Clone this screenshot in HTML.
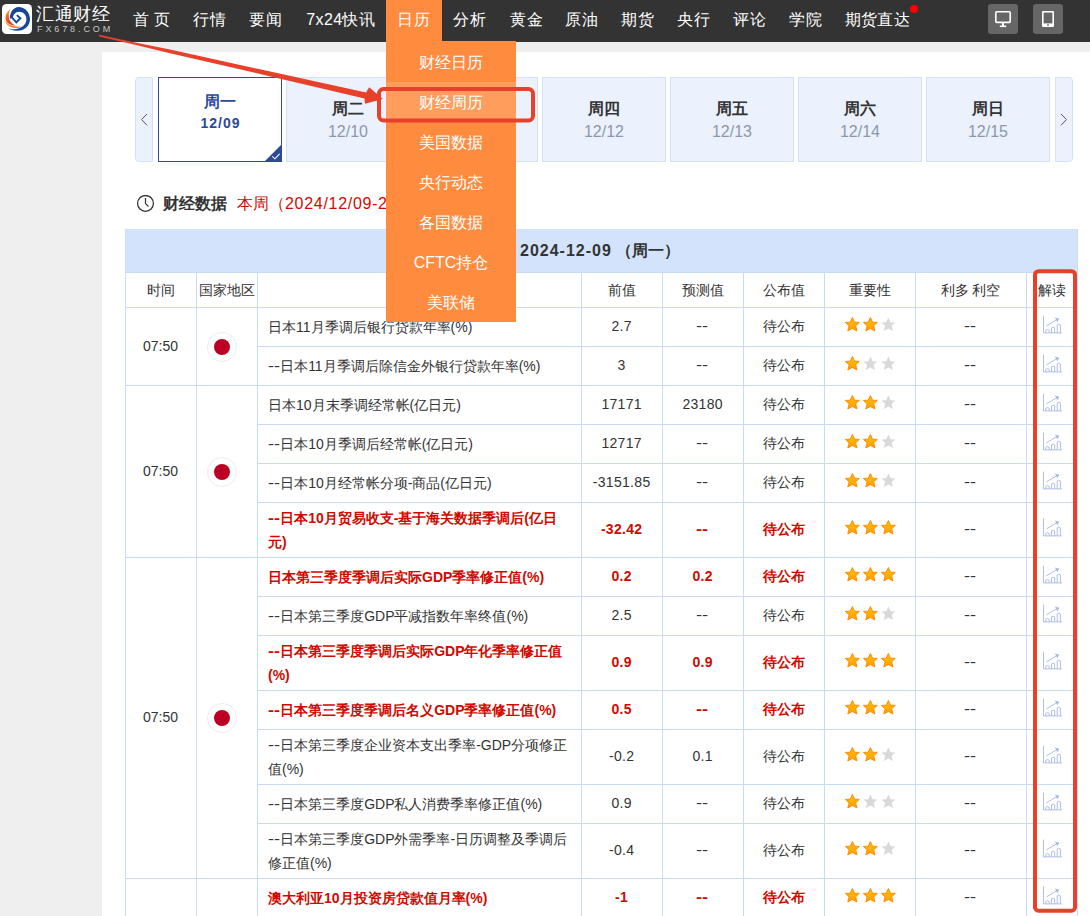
<!DOCTYPE html><html><head><meta charset="utf-8"><style>
*{box-sizing:border-box;margin:0;padding:0}
html,body{width:1090px;height:916px;overflow:hidden;background:#efefef;font-family:"Liberation Sans",sans-serif;color:#333}
.a{position:absolute;white-space:nowrap}
.nav{position:absolute;left:0;top:0;width:1090px;height:42px;background:#333333}
.ni{position:absolute;top:-1.5px;height:41px;line-height:41px;font-size:16px;color:#fff;letter-spacing:1px}
.tab{position:absolute;top:77px;height:85px;width:124px;background:#ebf2fd;border:1px solid #d3e2f8;text-align:center}
.tab .d{position:absolute;left:0;right:0;top:20.5px;font-size:16px;font-weight:bold;color:#333;line-height:20px}
.tab .t{position:absolute;left:0;right:0;top:45px;font-size:16px;color:#8e97a9;line-height:18px}
.hl{position:absolute;background:#c8daf4}
.c{position:absolute;text-align:center;font-size:14px;color:#333;white-space:nowrap}
.ev{position:absolute;font-size:14px;color:#333;line-height:24px}
.b{font-weight:bold;color:#d00a00}
.dd{position:absolute;left:386px;top:41px;width:130px;height:281px;background:#ff8b3f}
.ddi{position:absolute;left:386px;width:130px;height:40px;line-height:40px;text-align:center;color:#fff;font-size:16px}
</style></head><body>
<div class="a" style="left:102px;top:52px;width:1000px;height:900px;background:#fff"></div>
<div class="nav"></div>
<svg class="a" style="left:2px;top:4px" width="30" height="30" viewBox="0 0 30 30">
<defs><linearGradient id="og1" x1="0" y1="0" x2="0.3" y2="1"><stop offset="0" stop-color="#f7b52c"/><stop offset="0.55" stop-color="#ee5a22"/><stop offset="1" stop-color="#e8361a"/></linearGradient>
<linearGradient id="og2" x1="0" y1="0" x2="1" y2="0.3"><stop offset="0" stop-color="#f8c431"/><stop offset="0.5" stop-color="#f08a25"/><stop offset="1" stop-color="#e5381a"/></linearGradient></defs>
<rect x="0" y="0" width="30" height="30" rx="4.5" fill="#fff"/>
<path d="M7.8 14.5 C7.8 8 11.8 2.9 16.5 2.9 C22.8 2.9 28 8.3 28 15 C28 21.8 22.5 26.8 15.5 26.8 C12.3 26.8 9.2 25.9 7 24.6 C10 25.4 13 25.5 16.5 24.4 C21 23 24.4 19.8 24.4 15.2 C24.4 10.8 21.2 7.7 17.2 7.7 C13.5 7.7 10.8 10.8 10.8 14.5 Z" fill="#15469a"/>
<path d="M10.3 13.9 L14.3 18.3 L18.4 14.2 L14.8 11.1" fill="none" stroke="#15469a" stroke-width="1.9" stroke-linejoin="miter"/>
<path d="M8.6 4.8 C5 7.5 3.3 11 3.5 14.5 C3.8 18.5 7.5 21.5 14 21.6 C10 20 7.2 17 6.9 13.2 C6.6 10 7.2 7 8.6 4.8 Z" fill="url(#og1)"/>
<path d="M2 15.6 C3.5 20.5 7.5 23.5 12 23.8 C14.5 24 17.5 23.6 19.6 22.7 C17 22.8 14 22.7 11.5 22.2 C7.5 21.5 4 19 2 15.6 Z" fill="url(#og2)"/>
<path d="M6.5 24.3 C9 26 12 26.9 15.5 26.9 L15.5 26.1 C12.3 26 9 25.3 6.5 24.3 Z" fill="#4f8fd4"/>
</svg>
<div class="a" style="left:36px;top:3px;font-size:18px;line-height:22px;color:#fff;letter-spacing:0.5px">汇通财经</div>
<div class="a" style="left:37px;top:24px;font-size:9px;line-height:10px;color:#c8c8c8;letter-spacing:2.9px">FX678.COM</div>
<div class="a" style="left:386px;top:0;width:56px;height:42px;background:#ff8b3f"></div>
<div class="ni" style="left:132.7px;letter-spacing:0.4px">首 页</div>
<div class="ni" style="left:193.0px;letter-spacing:1px">行情</div>
<div class="ni" style="left:248.7px;letter-spacing:1px">要闻</div>
<div class="ni" style="left:306.2px;letter-spacing:0.4px">7x24快讯</div>
<div class="ni" style="left:396.7px;letter-spacing:1px">日历</div>
<div class="ni" style="left:452.5px;letter-spacing:1px">分析</div>
<div class="ni" style="left:509.5px;letter-spacing:1px">黄金</div>
<div class="ni" style="left:564.5px;letter-spacing:1px">原油</div>
<div class="ni" style="left:621.1px;letter-spacing:1px">期货</div>
<div class="ni" style="left:676.5px;letter-spacing:1px">央行</div>
<div class="ni" style="left:733.0px;letter-spacing:1px">评论</div>
<div class="ni" style="left:788.5px;letter-spacing:1px">学院</div>
<div class="ni" style="left:844.5px;letter-spacing:0.4px">期货直达</div>
<div class="a" style="left:910px;top:5px;width:8px;height:8px;border-radius:50%;background:#f00"></div>
<div class="a" style="left:988px;top:4px;width:30px;height:30px;border-radius:3px;background:#666"></div>
<svg class="a" style="left:988px;top:4px" width="30" height="30" viewBox="0 0 30 30">
<rect x="7.8" y="7.8" width="14.4" height="10.6" rx="1" fill="none" stroke="#fff" stroke-width="1.6"/>
<rect x="14" y="19" width="2" height="3" fill="#fff"/><rect x="11.8" y="21.5" width="6.4" height="1.6" fill="#fff"/>
</svg>
<div class="a" style="left:1033px;top:4px;width:30px;height:30px;border-radius:3px;background:#666"></div>
<svg class="a" style="left:1033px;top:4px" width="30" height="30" viewBox="0 0 30 30">
<rect x="9" y="7" width="12" height="16" rx="1" fill="#fff"/>
<rect x="10.6" y="8.6" width="8.8" height="10.8" fill="#666"/>
<rect x="14.2" y="20.2" width="1.6" height="1.6" fill="#666"/>
</svg>
<div class="a" style="left:135px;top:77px;width:18px;height:85px;background:#ebf2fd;border:1px solid #d3e2f8;border-radius:4px 0 0 4px"></div>
<svg class="a" style="left:135px;top:77px" width="18" height="85"><path d="M12 37 L6.5 42.6 L12 48.3" fill="none" stroke="#555" stroke-width="1"/></svg>
<div class="a" style="left:1055px;top:77px;width:18px;height:85px;background:#ebf2fd;border:1px solid #d3e2f8;border-radius:0 4px 4px 0"></div>
<svg class="a" style="left:1055px;top:77px" width="18" height="85"><path d="M6 37 L11.5 42.6 L6 48.3" fill="none" stroke="#555" stroke-width="1"/></svg>
<div class="tab" style="left:158px;background:#fff;border:1.5px solid #2c4a9a"><div class="d" style="top:13.5px;color:#2c4a9a">周一</div><div class="t" style="top:36px;font-size:14px;letter-spacing:1px;text-indent:1px;color:#2c4a9a;font-weight:bold">12/09</div><svg style="position:absolute;right:0;bottom:0" width="16" height="16"><path d="M16 0 L16 16 L0 16 Z" fill="#2c4a9a"/><path d="M7.3 11.4 L9.9 13.8 L14.6 8.8" fill="none" stroke="#fff" stroke-width="1.1"/></svg></div>
<div class="tab" style="left:286px"><div class="d">周二</div><div class="t">12/10</div></div>
<div class="tab" style="left:414px"><div class="d">周三</div><div class="t">12/11</div></div>
<div class="tab" style="left:542px"><div class="d">周四</div><div class="t">12/12</div></div>
<div class="tab" style="left:670px"><div class="d">周五</div><div class="t">12/13</div></div>
<div class="tab" style="left:798px"><div class="d">周六</div><div class="t">12/14</div></div>
<div class="tab" style="left:926px"><div class="d">周日</div><div class="t">12/15</div></div>
<svg class="a" style="left:136px;top:195px" width="19" height="18" viewBox="0 0 19 18">
<circle cx="9.5" cy="8.4" r="7.9" fill="none" stroke="#333" stroke-width="1.25"/>
<path d="M9.5 2.9 V8.6 L12.5 11.5" fill="none" stroke="#333" stroke-width="1.25"/></svg>
<div class="a" style="left:163px;top:194px;font-size:16px;line-height:20px;font-weight:bold;color:#333">财经数据</div>
<div class="a" style="left:237px;top:194px;font-size:16px;line-height:20px;color:#d00a00">本周（<span style="letter-spacing:0.7px">2024/12/09-2024/12/15</span>）</div>
<div class="a" style="left:125px;top:229px;width:953px;height:43px;background:#d2e3fb"></div>
<div class="a" style="left:520px;top:229px;height:43px;line-height:43px;font-size:16px;font-weight:bold;color:#333"><span style="letter-spacing:1px">2024-12-09</span> （周一）</div>
<div class="hl" style="left:125px;top:272px;width:953px;height:1px"></div>
<div class="hl" style="left:125px;top:307px;width:953px;height:1px"></div>
<div class="c" style="left:125px;width:71px;top:273px;height:35px;line-height:35px">时间</div>
<div class="c" style="left:196px;width:61px;top:273px;height:35px;line-height:35px">国家地区</div>
<div class="c" style="left:257px;width:324px;top:273px;height:35px;line-height:35px"></div>
<div class="c" style="left:581px;width:81px;top:273px;height:35px;line-height:35px">前值</div>
<div class="c" style="left:662px;width:81px;top:273px;height:35px;line-height:35px">预测值</div>
<div class="c" style="left:743px;width:81px;top:273px;height:35px;line-height:35px">公布值</div>
<div class="c" style="left:824px;width:91px;top:273px;height:35px;line-height:35px">重要性</div>
<div class="c" style="left:915px;width:111px;top:273px;height:35px;line-height:35px">利多 利空</div>
<div class="c" style="left:1026px;width:51px;top:273px;height:35px;line-height:35px">解读</div>
<div class="hl" style="left:125px;top:307px;width:953px;height:1px"></div>
<div class="c" style="left:125px;width:71px;top:307px;height:78px;line-height:78px">07:50</div>
<div class="a" style="left:207px;top:331.7px;width:30px;height:30px;border-radius:50%;border:1px solid #ececec;background:#fff"></div>
<div class="a" style="left:214px;top:338.7px;width:16px;height:16px;border-radius:50%;background:#bc0023"></div>
<div class="hl" style="left:125px;top:385px;width:953px;height:1px"></div>
<div class="c" style="left:125px;width:71px;top:385px;height:172px;line-height:172px">07:50</div>
<div class="a" style="left:207px;top:456.7px;width:30px;height:30px;border-radius:50%;border:1px solid #ececec;background:#fff"></div>
<div class="a" style="left:214px;top:463.7px;width:16px;height:16px;border-radius:50%;background:#bc0023"></div>
<div class="hl" style="left:125px;top:557px;width:953px;height:1px"></div>
<div class="c" style="left:125px;width:71px;top:557px;height:321px;line-height:321px">07:50</div>
<div class="a" style="left:207px;top:703.2px;width:30px;height:30px;border-radius:50%;border:1px solid #ececec;background:#fff"></div>
<div class="a" style="left:214px;top:710.2px;width:16px;height:16px;border-radius:50%;background:#bc0023"></div>
<div class="hl" style="left:125px;top:878px;width:953px;height:1px"></div>
<div class="c" style="left:125px;width:71px;top:878px;height:222px;line-height:222px">07:50</div>
<div class="hl" style="left:257px;top:307px;width:821px;height:1px"></div>
<div class="hl" style="left:257px;top:346px;width:821px;height:1px"></div>
<div class="hl" style="left:257px;top:385px;width:821px;height:1px"></div>
<div class="hl" style="left:257px;top:424px;width:821px;height:1px"></div>
<div class="hl" style="left:257px;top:463px;width:821px;height:1px"></div>
<div class="hl" style="left:257px;top:502px;width:821px;height:1px"></div>
<div class="hl" style="left:257px;top:557px;width:821px;height:1px"></div>
<div class="hl" style="left:257px;top:596px;width:821px;height:1px"></div>
<div class="hl" style="left:257px;top:635px;width:821px;height:1px"></div>
<div class="hl" style="left:257px;top:690px;width:821px;height:1px"></div>
<div class="hl" style="left:257px;top:729px;width:821px;height:1px"></div>
<div class="hl" style="left:257px;top:784px;width:821px;height:1px"></div>
<div class="hl" style="left:257px;top:823px;width:821px;height:1px"></div>
<div class="hl" style="left:257px;top:878px;width:821px;height:1px"></div>
<div class="hl" style="left:257px;top:917px;width:821px;height:1px"></div>
<div class="hl" style="left:125px;top:272px;width:1px;height:644px"></div>
<div class="hl" style="left:196px;top:272px;width:1px;height:644px"></div>
<div class="hl" style="left:257px;top:272px;width:1px;height:644px"></div>
<div class="hl" style="left:581px;top:272px;width:1px;height:644px"></div>
<div class="hl" style="left:662px;top:272px;width:1px;height:644px"></div>
<div class="hl" style="left:743px;top:272px;width:1px;height:644px"></div>
<div class="hl" style="left:824px;top:272px;width:1px;height:644px"></div>
<div class="hl" style="left:915px;top:272px;width:1px;height:644px"></div>
<div class="hl" style="left:1026px;top:272px;width:1px;height:644px"></div>
<div class="hl" style="left:1077px;top:272px;width:1px;height:644px"></div>
<div class="hl" style="left:125px;top:229px;width:1px;height:687px"></div>
<div class="hl" style="left:1077px;top:229px;width:1px;height:687px"></div>
<svg width="0" height="0" style="position:absolute"><defs><linearGradient id="sg" x1="0" y1="0" x2="0" y2="1"><stop offset="0" stop-color="#ffc000"/><stop offset="1" stop-color="#ffa000"/></linearGradient></defs></svg>
<div class="ev" style="left:268px;top:307px;width:305px;height:39px;display:flex;align-items:center"><div>日本11月季调后银行贷款年率(%)</div></div>
<div class="c" style="letter-spacing:0.3px;text-indent:0.3px;left:581px;width:81px;top:307px;height:39px;line-height:39px">2.7</div>
<div class="c" style="left:662px;width:81px;top:307px;height:39px;line-height:39px"><span style="display:inline-block;transform:scaleX(1.3);transform-origin:0 50%;margin-right:2.8px">--</span></div>
<div class="c" style="left:743px;width:81px;top:307px;height:39px;line-height:39px">待公布</div>
<div class="c" style="left:915px;width:111px;top:307px;height:39px;line-height:39px"><span style="display:inline-block;transform:scaleX(1.3);transform-origin:0 50%;margin-right:2.8px">--</span></div>
<svg class="a" style="left:844.8px;top:316.8px" width="15" height="15" viewBox="0 0 15 15"><path d="M7.4 0.5 L9.6 5.2 L14.3 5.4 L10.7 8.8 L11.9 13.9 L7.4 11.5 L2.8 13.9 L4.1 8.8 L0.4 5.4 L5.2 5.2 Z" fill="url(#sg)" stroke="#ff8400" stroke-width="0.9" stroke-linejoin="round"/></svg>
<svg class="a" style="left:862.8px;top:316.8px" width="15" height="15" viewBox="0 0 15 15"><path d="M7.4 0.5 L9.6 5.2 L14.3 5.4 L10.7 8.8 L11.9 13.9 L7.4 11.5 L2.8 13.9 L4.1 8.8 L0.4 5.4 L5.2 5.2 Z" fill="url(#sg)" stroke="#ff8400" stroke-width="0.9" stroke-linejoin="round"/></svg>
<svg class="a" style="left:880.8px;top:316.8px" width="15" height="15" viewBox="0 0 15 15"><path d="M7.4 0.5 L9.6 5.2 L14.3 5.4 L10.7 8.8 L11.9 13.9 L7.4 11.5 L2.8 13.9 L4.1 8.8 L0.4 5.4 L5.2 5.2 Z" fill="#d9d9d9" stroke="none" stroke-width="0.9" stroke-linejoin="round"/></svg>
<svg class="a" style="left:1042px;top:314.5px" width="21" height="20" viewBox="0 0 21 20"><g fill="none" stroke="#a6b8e2" stroke-width="0.9"><path d="M1.5 0.6 V17.9 H20"/><path d="M3.8 17.9 V15.3 Q5.5 13.8 7.2 15.3 V17.9"/><path d="M9.5 17.9 V12.9 Q11 11.4 12.7 12.9 V17.9"/><path d="M15.2 17.9 V9.9 Q16.8 8.4 18.4 9.9 V17.9"/><path d="M4.3 10.9 L15 4.6"/></g><path d="M12.9 2.6 L17.3 3.7 L15.3 7.2 Z" fill="#a6b8e2"/></svg>
<div class="ev" style="left:268px;top:346px;width:305px;height:39px;display:flex;align-items:center"><div><span style="display:inline-block;transform:scaleX(1.3);transform-origin:0 50%;margin-right:2.8px">--</span>日本11月季调后除信金外银行贷款年率(%)</div></div>
<div class="c" style="letter-spacing:0.3px;text-indent:0.3px;left:581px;width:81px;top:346px;height:39px;line-height:39px">3</div>
<div class="c" style="left:662px;width:81px;top:346px;height:39px;line-height:39px"><span style="display:inline-block;transform:scaleX(1.3);transform-origin:0 50%;margin-right:2.8px">--</span></div>
<div class="c" style="left:743px;width:81px;top:346px;height:39px;line-height:39px">待公布</div>
<div class="c" style="left:915px;width:111px;top:346px;height:39px;line-height:39px"><span style="display:inline-block;transform:scaleX(1.3);transform-origin:0 50%;margin-right:2.8px">--</span></div>
<svg class="a" style="left:844.8px;top:355.8px" width="15" height="15" viewBox="0 0 15 15"><path d="M7.4 0.5 L9.6 5.2 L14.3 5.4 L10.7 8.8 L11.9 13.9 L7.4 11.5 L2.8 13.9 L4.1 8.8 L0.4 5.4 L5.2 5.2 Z" fill="url(#sg)" stroke="#ff8400" stroke-width="0.9" stroke-linejoin="round"/></svg>
<svg class="a" style="left:862.8px;top:355.8px" width="15" height="15" viewBox="0 0 15 15"><path d="M7.4 0.5 L9.6 5.2 L14.3 5.4 L10.7 8.8 L11.9 13.9 L7.4 11.5 L2.8 13.9 L4.1 8.8 L0.4 5.4 L5.2 5.2 Z" fill="#d9d9d9" stroke="none" stroke-width="0.9" stroke-linejoin="round"/></svg>
<svg class="a" style="left:880.8px;top:355.8px" width="15" height="15" viewBox="0 0 15 15"><path d="M7.4 0.5 L9.6 5.2 L14.3 5.4 L10.7 8.8 L11.9 13.9 L7.4 11.5 L2.8 13.9 L4.1 8.8 L0.4 5.4 L5.2 5.2 Z" fill="#d9d9d9" stroke="none" stroke-width="0.9" stroke-linejoin="round"/></svg>
<svg class="a" style="left:1042px;top:353.5px" width="21" height="20" viewBox="0 0 21 20"><g fill="none" stroke="#a6b8e2" stroke-width="0.9"><path d="M1.5 0.6 V17.9 H20"/><path d="M3.8 17.9 V15.3 Q5.5 13.8 7.2 15.3 V17.9"/><path d="M9.5 17.9 V12.9 Q11 11.4 12.7 12.9 V17.9"/><path d="M15.2 17.9 V9.9 Q16.8 8.4 18.4 9.9 V17.9"/><path d="M4.3 10.9 L15 4.6"/></g><path d="M12.9 2.6 L17.3 3.7 L15.3 7.2 Z" fill="#a6b8e2"/></svg>
<div class="ev" style="left:268px;top:385px;width:305px;height:39px;display:flex;align-items:center"><div>日本10月末季调经常帐(亿日元)</div></div>
<div class="c" style="letter-spacing:0.3px;text-indent:0.3px;left:581px;width:81px;top:385px;height:39px;line-height:39px">17171</div>
<div class="c" style="letter-spacing:0.3px;text-indent:0.3px;left:662px;width:81px;top:385px;height:39px;line-height:39px">23180</div>
<div class="c" style="left:743px;width:81px;top:385px;height:39px;line-height:39px">待公布</div>
<div class="c" style="left:915px;width:111px;top:385px;height:39px;line-height:39px"><span style="display:inline-block;transform:scaleX(1.3);transform-origin:0 50%;margin-right:2.8px">--</span></div>
<svg class="a" style="left:844.8px;top:394.8px" width="15" height="15" viewBox="0 0 15 15"><path d="M7.4 0.5 L9.6 5.2 L14.3 5.4 L10.7 8.8 L11.9 13.9 L7.4 11.5 L2.8 13.9 L4.1 8.8 L0.4 5.4 L5.2 5.2 Z" fill="url(#sg)" stroke="#ff8400" stroke-width="0.9" stroke-linejoin="round"/></svg>
<svg class="a" style="left:862.8px;top:394.8px" width="15" height="15" viewBox="0 0 15 15"><path d="M7.4 0.5 L9.6 5.2 L14.3 5.4 L10.7 8.8 L11.9 13.9 L7.4 11.5 L2.8 13.9 L4.1 8.8 L0.4 5.4 L5.2 5.2 Z" fill="url(#sg)" stroke="#ff8400" stroke-width="0.9" stroke-linejoin="round"/></svg>
<svg class="a" style="left:880.8px;top:394.8px" width="15" height="15" viewBox="0 0 15 15"><path d="M7.4 0.5 L9.6 5.2 L14.3 5.4 L10.7 8.8 L11.9 13.9 L7.4 11.5 L2.8 13.9 L4.1 8.8 L0.4 5.4 L5.2 5.2 Z" fill="#d9d9d9" stroke="none" stroke-width="0.9" stroke-linejoin="round"/></svg>
<svg class="a" style="left:1042px;top:392.5px" width="21" height="20" viewBox="0 0 21 20"><g fill="none" stroke="#a6b8e2" stroke-width="0.9"><path d="M1.5 0.6 V17.9 H20"/><path d="M3.8 17.9 V15.3 Q5.5 13.8 7.2 15.3 V17.9"/><path d="M9.5 17.9 V12.9 Q11 11.4 12.7 12.9 V17.9"/><path d="M15.2 17.9 V9.9 Q16.8 8.4 18.4 9.9 V17.9"/><path d="M4.3 10.9 L15 4.6"/></g><path d="M12.9 2.6 L17.3 3.7 L15.3 7.2 Z" fill="#a6b8e2"/></svg>
<div class="ev" style="left:268px;top:424px;width:305px;height:39px;display:flex;align-items:center"><div><span style="display:inline-block;transform:scaleX(1.3);transform-origin:0 50%;margin-right:2.8px">--</span>日本10月季调后经常帐(亿日元)</div></div>
<div class="c" style="letter-spacing:0.3px;text-indent:0.3px;left:581px;width:81px;top:424px;height:39px;line-height:39px">12717</div>
<div class="c" style="left:662px;width:81px;top:424px;height:39px;line-height:39px"><span style="display:inline-block;transform:scaleX(1.3);transform-origin:0 50%;margin-right:2.8px">--</span></div>
<div class="c" style="left:743px;width:81px;top:424px;height:39px;line-height:39px">待公布</div>
<div class="c" style="left:915px;width:111px;top:424px;height:39px;line-height:39px"><span style="display:inline-block;transform:scaleX(1.3);transform-origin:0 50%;margin-right:2.8px">--</span></div>
<svg class="a" style="left:844.8px;top:433.8px" width="15" height="15" viewBox="0 0 15 15"><path d="M7.4 0.5 L9.6 5.2 L14.3 5.4 L10.7 8.8 L11.9 13.9 L7.4 11.5 L2.8 13.9 L4.1 8.8 L0.4 5.4 L5.2 5.2 Z" fill="url(#sg)" stroke="#ff8400" stroke-width="0.9" stroke-linejoin="round"/></svg>
<svg class="a" style="left:862.8px;top:433.8px" width="15" height="15" viewBox="0 0 15 15"><path d="M7.4 0.5 L9.6 5.2 L14.3 5.4 L10.7 8.8 L11.9 13.9 L7.4 11.5 L2.8 13.9 L4.1 8.8 L0.4 5.4 L5.2 5.2 Z" fill="url(#sg)" stroke="#ff8400" stroke-width="0.9" stroke-linejoin="round"/></svg>
<svg class="a" style="left:880.8px;top:433.8px" width="15" height="15" viewBox="0 0 15 15"><path d="M7.4 0.5 L9.6 5.2 L14.3 5.4 L10.7 8.8 L11.9 13.9 L7.4 11.5 L2.8 13.9 L4.1 8.8 L0.4 5.4 L5.2 5.2 Z" fill="#d9d9d9" stroke="none" stroke-width="0.9" stroke-linejoin="round"/></svg>
<svg class="a" style="left:1042px;top:431.5px" width="21" height="20" viewBox="0 0 21 20"><g fill="none" stroke="#a6b8e2" stroke-width="0.9"><path d="M1.5 0.6 V17.9 H20"/><path d="M3.8 17.9 V15.3 Q5.5 13.8 7.2 15.3 V17.9"/><path d="M9.5 17.9 V12.9 Q11 11.4 12.7 12.9 V17.9"/><path d="M15.2 17.9 V9.9 Q16.8 8.4 18.4 9.9 V17.9"/><path d="M4.3 10.9 L15 4.6"/></g><path d="M12.9 2.6 L17.3 3.7 L15.3 7.2 Z" fill="#a6b8e2"/></svg>
<div class="ev" style="left:268px;top:463px;width:305px;height:39px;display:flex;align-items:center"><div><span style="display:inline-block;transform:scaleX(1.3);transform-origin:0 50%;margin-right:2.8px">--</span>日本10月经常帐分项-商品(亿日元)</div></div>
<div class="c" style="letter-spacing:0.3px;text-indent:0.3px;left:581px;width:81px;top:463px;height:39px;line-height:39px">-3151.85</div>
<div class="c" style="left:662px;width:81px;top:463px;height:39px;line-height:39px"><span style="display:inline-block;transform:scaleX(1.3);transform-origin:0 50%;margin-right:2.8px">--</span></div>
<div class="c" style="left:743px;width:81px;top:463px;height:39px;line-height:39px">待公布</div>
<div class="c" style="left:915px;width:111px;top:463px;height:39px;line-height:39px"><span style="display:inline-block;transform:scaleX(1.3);transform-origin:0 50%;margin-right:2.8px">--</span></div>
<svg class="a" style="left:844.8px;top:472.8px" width="15" height="15" viewBox="0 0 15 15"><path d="M7.4 0.5 L9.6 5.2 L14.3 5.4 L10.7 8.8 L11.9 13.9 L7.4 11.5 L2.8 13.9 L4.1 8.8 L0.4 5.4 L5.2 5.2 Z" fill="url(#sg)" stroke="#ff8400" stroke-width="0.9" stroke-linejoin="round"/></svg>
<svg class="a" style="left:862.8px;top:472.8px" width="15" height="15" viewBox="0 0 15 15"><path d="M7.4 0.5 L9.6 5.2 L14.3 5.4 L10.7 8.8 L11.9 13.9 L7.4 11.5 L2.8 13.9 L4.1 8.8 L0.4 5.4 L5.2 5.2 Z" fill="url(#sg)" stroke="#ff8400" stroke-width="0.9" stroke-linejoin="round"/></svg>
<svg class="a" style="left:880.8px;top:472.8px" width="15" height="15" viewBox="0 0 15 15"><path d="M7.4 0.5 L9.6 5.2 L14.3 5.4 L10.7 8.8 L11.9 13.9 L7.4 11.5 L2.8 13.9 L4.1 8.8 L0.4 5.4 L5.2 5.2 Z" fill="#d9d9d9" stroke="none" stroke-width="0.9" stroke-linejoin="round"/></svg>
<svg class="a" style="left:1042px;top:470.5px" width="21" height="20" viewBox="0 0 21 20"><g fill="none" stroke="#a6b8e2" stroke-width="0.9"><path d="M1.5 0.6 V17.9 H20"/><path d="M3.8 17.9 V15.3 Q5.5 13.8 7.2 15.3 V17.9"/><path d="M9.5 17.9 V12.9 Q11 11.4 12.7 12.9 V17.9"/><path d="M15.2 17.9 V9.9 Q16.8 8.4 18.4 9.9 V17.9"/><path d="M4.3 10.9 L15 4.6"/></g><path d="M12.9 2.6 L17.3 3.7 L15.3 7.2 Z" fill="#a6b8e2"/></svg>
<div class="ev b" style="left:268px;top:502px;width:305px;height:55px;display:flex;align-items:center"><div><span style="display:inline-block;transform:scaleX(1.3);transform-origin:0 50%;margin-right:2.8px">--</span>日本10月贸易收支-基于海关数据季调后(亿日<br>元)</div></div>
<div class="c b" style="letter-spacing:0.3px;text-indent:0.3px;left:581px;width:81px;top:502px;height:55px;line-height:55px">-32.42</div>
<div class="c b" style="left:662px;width:81px;top:502px;height:55px;line-height:55px"><span style="display:inline-block;transform:scaleX(1.3);transform-origin:0 50%;margin-right:2.8px">--</span></div>
<div class="c b" style="left:743px;width:81px;top:502px;height:55px;line-height:55px">待公布</div>
<div class="c" style="left:915px;width:111px;top:502px;height:55px;line-height:55px"><span style="display:inline-block;transform:scaleX(1.3);transform-origin:0 50%;margin-right:2.8px">--</span></div>
<svg class="a" style="left:844.8px;top:519.8px" width="15" height="15" viewBox="0 0 15 15"><path d="M7.4 0.5 L9.6 5.2 L14.3 5.4 L10.7 8.8 L11.9 13.9 L7.4 11.5 L2.8 13.9 L4.1 8.8 L0.4 5.4 L5.2 5.2 Z" fill="url(#sg)" stroke="#ff8400" stroke-width="0.9" stroke-linejoin="round"/></svg>
<svg class="a" style="left:862.8px;top:519.8px" width="15" height="15" viewBox="0 0 15 15"><path d="M7.4 0.5 L9.6 5.2 L14.3 5.4 L10.7 8.8 L11.9 13.9 L7.4 11.5 L2.8 13.9 L4.1 8.8 L0.4 5.4 L5.2 5.2 Z" fill="url(#sg)" stroke="#ff8400" stroke-width="0.9" stroke-linejoin="round"/></svg>
<svg class="a" style="left:880.8px;top:519.8px" width="15" height="15" viewBox="0 0 15 15"><path d="M7.4 0.5 L9.6 5.2 L14.3 5.4 L10.7 8.8 L11.9 13.9 L7.4 11.5 L2.8 13.9 L4.1 8.8 L0.4 5.4 L5.2 5.2 Z" fill="url(#sg)" stroke="#ff8400" stroke-width="0.9" stroke-linejoin="round"/></svg>
<svg class="a" style="left:1042px;top:517.5px" width="21" height="20" viewBox="0 0 21 20"><g fill="none" stroke="#a6b8e2" stroke-width="0.9"><path d="M1.5 0.6 V17.9 H20"/><path d="M3.8 17.9 V15.3 Q5.5 13.8 7.2 15.3 V17.9"/><path d="M9.5 17.9 V12.9 Q11 11.4 12.7 12.9 V17.9"/><path d="M15.2 17.9 V9.9 Q16.8 8.4 18.4 9.9 V17.9"/><path d="M4.3 10.9 L15 4.6"/></g><path d="M12.9 2.6 L17.3 3.7 L15.3 7.2 Z" fill="#a6b8e2"/></svg>
<div class="ev b" style="left:268px;top:557px;width:305px;height:39px;display:flex;align-items:center"><div>日本第三季度季调后实际GDP季率修正值(%)</div></div>
<div class="c b" style="letter-spacing:0.3px;text-indent:0.3px;left:581px;width:81px;top:557px;height:39px;line-height:39px">0.2</div>
<div class="c b" style="letter-spacing:0.3px;text-indent:0.3px;left:662px;width:81px;top:557px;height:39px;line-height:39px">0.2</div>
<div class="c b" style="left:743px;width:81px;top:557px;height:39px;line-height:39px">待公布</div>
<div class="c" style="left:915px;width:111px;top:557px;height:39px;line-height:39px"><span style="display:inline-block;transform:scaleX(1.3);transform-origin:0 50%;margin-right:2.8px">--</span></div>
<svg class="a" style="left:844.8px;top:566.8px" width="15" height="15" viewBox="0 0 15 15"><path d="M7.4 0.5 L9.6 5.2 L14.3 5.4 L10.7 8.8 L11.9 13.9 L7.4 11.5 L2.8 13.9 L4.1 8.8 L0.4 5.4 L5.2 5.2 Z" fill="url(#sg)" stroke="#ff8400" stroke-width="0.9" stroke-linejoin="round"/></svg>
<svg class="a" style="left:862.8px;top:566.8px" width="15" height="15" viewBox="0 0 15 15"><path d="M7.4 0.5 L9.6 5.2 L14.3 5.4 L10.7 8.8 L11.9 13.9 L7.4 11.5 L2.8 13.9 L4.1 8.8 L0.4 5.4 L5.2 5.2 Z" fill="url(#sg)" stroke="#ff8400" stroke-width="0.9" stroke-linejoin="round"/></svg>
<svg class="a" style="left:880.8px;top:566.8px" width="15" height="15" viewBox="0 0 15 15"><path d="M7.4 0.5 L9.6 5.2 L14.3 5.4 L10.7 8.8 L11.9 13.9 L7.4 11.5 L2.8 13.9 L4.1 8.8 L0.4 5.4 L5.2 5.2 Z" fill="url(#sg)" stroke="#ff8400" stroke-width="0.9" stroke-linejoin="round"/></svg>
<svg class="a" style="left:1042px;top:564.5px" width="21" height="20" viewBox="0 0 21 20"><g fill="none" stroke="#a6b8e2" stroke-width="0.9"><path d="M1.5 0.6 V17.9 H20"/><path d="M3.8 17.9 V15.3 Q5.5 13.8 7.2 15.3 V17.9"/><path d="M9.5 17.9 V12.9 Q11 11.4 12.7 12.9 V17.9"/><path d="M15.2 17.9 V9.9 Q16.8 8.4 18.4 9.9 V17.9"/><path d="M4.3 10.9 L15 4.6"/></g><path d="M12.9 2.6 L17.3 3.7 L15.3 7.2 Z" fill="#a6b8e2"/></svg>
<div class="ev" style="left:268px;top:596px;width:305px;height:39px;display:flex;align-items:center"><div><span style="display:inline-block;transform:scaleX(1.3);transform-origin:0 50%;margin-right:2.8px">--</span>日本第三季度GDP平减指数年率终值(%)</div></div>
<div class="c" style="letter-spacing:0.3px;text-indent:0.3px;left:581px;width:81px;top:596px;height:39px;line-height:39px">2.5</div>
<div class="c" style="left:662px;width:81px;top:596px;height:39px;line-height:39px"><span style="display:inline-block;transform:scaleX(1.3);transform-origin:0 50%;margin-right:2.8px">--</span></div>
<div class="c" style="left:743px;width:81px;top:596px;height:39px;line-height:39px">待公布</div>
<div class="c" style="left:915px;width:111px;top:596px;height:39px;line-height:39px"><span style="display:inline-block;transform:scaleX(1.3);transform-origin:0 50%;margin-right:2.8px">--</span></div>
<svg class="a" style="left:844.8px;top:605.8px" width="15" height="15" viewBox="0 0 15 15"><path d="M7.4 0.5 L9.6 5.2 L14.3 5.4 L10.7 8.8 L11.9 13.9 L7.4 11.5 L2.8 13.9 L4.1 8.8 L0.4 5.4 L5.2 5.2 Z" fill="url(#sg)" stroke="#ff8400" stroke-width="0.9" stroke-linejoin="round"/></svg>
<svg class="a" style="left:862.8px;top:605.8px" width="15" height="15" viewBox="0 0 15 15"><path d="M7.4 0.5 L9.6 5.2 L14.3 5.4 L10.7 8.8 L11.9 13.9 L7.4 11.5 L2.8 13.9 L4.1 8.8 L0.4 5.4 L5.2 5.2 Z" fill="url(#sg)" stroke="#ff8400" stroke-width="0.9" stroke-linejoin="round"/></svg>
<svg class="a" style="left:880.8px;top:605.8px" width="15" height="15" viewBox="0 0 15 15"><path d="M7.4 0.5 L9.6 5.2 L14.3 5.4 L10.7 8.8 L11.9 13.9 L7.4 11.5 L2.8 13.9 L4.1 8.8 L0.4 5.4 L5.2 5.2 Z" fill="#d9d9d9" stroke="none" stroke-width="0.9" stroke-linejoin="round"/></svg>
<svg class="a" style="left:1042px;top:603.5px" width="21" height="20" viewBox="0 0 21 20"><g fill="none" stroke="#a6b8e2" stroke-width="0.9"><path d="M1.5 0.6 V17.9 H20"/><path d="M3.8 17.9 V15.3 Q5.5 13.8 7.2 15.3 V17.9"/><path d="M9.5 17.9 V12.9 Q11 11.4 12.7 12.9 V17.9"/><path d="M15.2 17.9 V9.9 Q16.8 8.4 18.4 9.9 V17.9"/><path d="M4.3 10.9 L15 4.6"/></g><path d="M12.9 2.6 L17.3 3.7 L15.3 7.2 Z" fill="#a6b8e2"/></svg>
<div class="ev b" style="left:268px;top:635px;width:305px;height:55px;display:flex;align-items:center"><div><span style="display:inline-block;transform:scaleX(1.3);transform-origin:0 50%;margin-right:2.8px">--</span>日本第三季度季调后实际GDP年化季率修正值<br>(%)</div></div>
<div class="c b" style="letter-spacing:0.3px;text-indent:0.3px;left:581px;width:81px;top:635px;height:55px;line-height:55px">0.9</div>
<div class="c b" style="letter-spacing:0.3px;text-indent:0.3px;left:662px;width:81px;top:635px;height:55px;line-height:55px">0.9</div>
<div class="c b" style="left:743px;width:81px;top:635px;height:55px;line-height:55px">待公布</div>
<div class="c" style="left:915px;width:111px;top:635px;height:55px;line-height:55px"><span style="display:inline-block;transform:scaleX(1.3);transform-origin:0 50%;margin-right:2.8px">--</span></div>
<svg class="a" style="left:844.8px;top:652.8px" width="15" height="15" viewBox="0 0 15 15"><path d="M7.4 0.5 L9.6 5.2 L14.3 5.4 L10.7 8.8 L11.9 13.9 L7.4 11.5 L2.8 13.9 L4.1 8.8 L0.4 5.4 L5.2 5.2 Z" fill="url(#sg)" stroke="#ff8400" stroke-width="0.9" stroke-linejoin="round"/></svg>
<svg class="a" style="left:862.8px;top:652.8px" width="15" height="15" viewBox="0 0 15 15"><path d="M7.4 0.5 L9.6 5.2 L14.3 5.4 L10.7 8.8 L11.9 13.9 L7.4 11.5 L2.8 13.9 L4.1 8.8 L0.4 5.4 L5.2 5.2 Z" fill="url(#sg)" stroke="#ff8400" stroke-width="0.9" stroke-linejoin="round"/></svg>
<svg class="a" style="left:880.8px;top:652.8px" width="15" height="15" viewBox="0 0 15 15"><path d="M7.4 0.5 L9.6 5.2 L14.3 5.4 L10.7 8.8 L11.9 13.9 L7.4 11.5 L2.8 13.9 L4.1 8.8 L0.4 5.4 L5.2 5.2 Z" fill="url(#sg)" stroke="#ff8400" stroke-width="0.9" stroke-linejoin="round"/></svg>
<svg class="a" style="left:1042px;top:650.5px" width="21" height="20" viewBox="0 0 21 20"><g fill="none" stroke="#a6b8e2" stroke-width="0.9"><path d="M1.5 0.6 V17.9 H20"/><path d="M3.8 17.9 V15.3 Q5.5 13.8 7.2 15.3 V17.9"/><path d="M9.5 17.9 V12.9 Q11 11.4 12.7 12.9 V17.9"/><path d="M15.2 17.9 V9.9 Q16.8 8.4 18.4 9.9 V17.9"/><path d="M4.3 10.9 L15 4.6"/></g><path d="M12.9 2.6 L17.3 3.7 L15.3 7.2 Z" fill="#a6b8e2"/></svg>
<div class="ev b" style="left:268px;top:690px;width:305px;height:39px;display:flex;align-items:center"><div><span style="display:inline-block;transform:scaleX(1.3);transform-origin:0 50%;margin-right:2.8px">--</span>日本第三季度季调后名义GDP季率修正值(%)</div></div>
<div class="c b" style="letter-spacing:0.3px;text-indent:0.3px;left:581px;width:81px;top:690px;height:39px;line-height:39px">0.5</div>
<div class="c b" style="left:662px;width:81px;top:690px;height:39px;line-height:39px"><span style="display:inline-block;transform:scaleX(1.3);transform-origin:0 50%;margin-right:2.8px">--</span></div>
<div class="c b" style="left:743px;width:81px;top:690px;height:39px;line-height:39px">待公布</div>
<div class="c" style="left:915px;width:111px;top:690px;height:39px;line-height:39px"><span style="display:inline-block;transform:scaleX(1.3);transform-origin:0 50%;margin-right:2.8px">--</span></div>
<svg class="a" style="left:844.8px;top:699.8px" width="15" height="15" viewBox="0 0 15 15"><path d="M7.4 0.5 L9.6 5.2 L14.3 5.4 L10.7 8.8 L11.9 13.9 L7.4 11.5 L2.8 13.9 L4.1 8.8 L0.4 5.4 L5.2 5.2 Z" fill="url(#sg)" stroke="#ff8400" stroke-width="0.9" stroke-linejoin="round"/></svg>
<svg class="a" style="left:862.8px;top:699.8px" width="15" height="15" viewBox="0 0 15 15"><path d="M7.4 0.5 L9.6 5.2 L14.3 5.4 L10.7 8.8 L11.9 13.9 L7.4 11.5 L2.8 13.9 L4.1 8.8 L0.4 5.4 L5.2 5.2 Z" fill="url(#sg)" stroke="#ff8400" stroke-width="0.9" stroke-linejoin="round"/></svg>
<svg class="a" style="left:880.8px;top:699.8px" width="15" height="15" viewBox="0 0 15 15"><path d="M7.4 0.5 L9.6 5.2 L14.3 5.4 L10.7 8.8 L11.9 13.9 L7.4 11.5 L2.8 13.9 L4.1 8.8 L0.4 5.4 L5.2 5.2 Z" fill="url(#sg)" stroke="#ff8400" stroke-width="0.9" stroke-linejoin="round"/></svg>
<svg class="a" style="left:1042px;top:697.5px" width="21" height="20" viewBox="0 0 21 20"><g fill="none" stroke="#a6b8e2" stroke-width="0.9"><path d="M1.5 0.6 V17.9 H20"/><path d="M3.8 17.9 V15.3 Q5.5 13.8 7.2 15.3 V17.9"/><path d="M9.5 17.9 V12.9 Q11 11.4 12.7 12.9 V17.9"/><path d="M15.2 17.9 V9.9 Q16.8 8.4 18.4 9.9 V17.9"/><path d="M4.3 10.9 L15 4.6"/></g><path d="M12.9 2.6 L17.3 3.7 L15.3 7.2 Z" fill="#a6b8e2"/></svg>
<div class="ev" style="left:268px;top:729px;width:305px;height:55px;display:flex;align-items:center"><div><span style="display:inline-block;transform:scaleX(1.3);transform-origin:0 50%;margin-right:2.8px">--</span>日本第三季度企业资本支出季率-GDP分项修正<br>值(%)</div></div>
<div class="c" style="letter-spacing:0.3px;text-indent:0.3px;left:581px;width:81px;top:729px;height:55px;line-height:55px">-0.2</div>
<div class="c" style="letter-spacing:0.3px;text-indent:0.3px;left:662px;width:81px;top:729px;height:55px;line-height:55px">0.1</div>
<div class="c" style="left:743px;width:81px;top:729px;height:55px;line-height:55px">待公布</div>
<div class="c" style="left:915px;width:111px;top:729px;height:55px;line-height:55px"><span style="display:inline-block;transform:scaleX(1.3);transform-origin:0 50%;margin-right:2.8px">--</span></div>
<svg class="a" style="left:844.8px;top:746.8px" width="15" height="15" viewBox="0 0 15 15"><path d="M7.4 0.5 L9.6 5.2 L14.3 5.4 L10.7 8.8 L11.9 13.9 L7.4 11.5 L2.8 13.9 L4.1 8.8 L0.4 5.4 L5.2 5.2 Z" fill="url(#sg)" stroke="#ff8400" stroke-width="0.9" stroke-linejoin="round"/></svg>
<svg class="a" style="left:862.8px;top:746.8px" width="15" height="15" viewBox="0 0 15 15"><path d="M7.4 0.5 L9.6 5.2 L14.3 5.4 L10.7 8.8 L11.9 13.9 L7.4 11.5 L2.8 13.9 L4.1 8.8 L0.4 5.4 L5.2 5.2 Z" fill="url(#sg)" stroke="#ff8400" stroke-width="0.9" stroke-linejoin="round"/></svg>
<svg class="a" style="left:880.8px;top:746.8px" width="15" height="15" viewBox="0 0 15 15"><path d="M7.4 0.5 L9.6 5.2 L14.3 5.4 L10.7 8.8 L11.9 13.9 L7.4 11.5 L2.8 13.9 L4.1 8.8 L0.4 5.4 L5.2 5.2 Z" fill="#d9d9d9" stroke="none" stroke-width="0.9" stroke-linejoin="round"/></svg>
<svg class="a" style="left:1042px;top:744.5px" width="21" height="20" viewBox="0 0 21 20"><g fill="none" stroke="#a6b8e2" stroke-width="0.9"><path d="M1.5 0.6 V17.9 H20"/><path d="M3.8 17.9 V15.3 Q5.5 13.8 7.2 15.3 V17.9"/><path d="M9.5 17.9 V12.9 Q11 11.4 12.7 12.9 V17.9"/><path d="M15.2 17.9 V9.9 Q16.8 8.4 18.4 9.9 V17.9"/><path d="M4.3 10.9 L15 4.6"/></g><path d="M12.9 2.6 L17.3 3.7 L15.3 7.2 Z" fill="#a6b8e2"/></svg>
<div class="ev" style="left:268px;top:784px;width:305px;height:39px;display:flex;align-items:center"><div><span style="display:inline-block;transform:scaleX(1.3);transform-origin:0 50%;margin-right:2.8px">--</span>日本第三季度GDP私人消费季率修正值(%)</div></div>
<div class="c" style="letter-spacing:0.3px;text-indent:0.3px;left:581px;width:81px;top:784px;height:39px;line-height:39px">0.9</div>
<div class="c" style="left:662px;width:81px;top:784px;height:39px;line-height:39px"><span style="display:inline-block;transform:scaleX(1.3);transform-origin:0 50%;margin-right:2.8px">--</span></div>
<div class="c" style="left:743px;width:81px;top:784px;height:39px;line-height:39px">待公布</div>
<div class="c" style="left:915px;width:111px;top:784px;height:39px;line-height:39px"><span style="display:inline-block;transform:scaleX(1.3);transform-origin:0 50%;margin-right:2.8px">--</span></div>
<svg class="a" style="left:844.8px;top:793.8px" width="15" height="15" viewBox="0 0 15 15"><path d="M7.4 0.5 L9.6 5.2 L14.3 5.4 L10.7 8.8 L11.9 13.9 L7.4 11.5 L2.8 13.9 L4.1 8.8 L0.4 5.4 L5.2 5.2 Z" fill="url(#sg)" stroke="#ff8400" stroke-width="0.9" stroke-linejoin="round"/></svg>
<svg class="a" style="left:862.8px;top:793.8px" width="15" height="15" viewBox="0 0 15 15"><path d="M7.4 0.5 L9.6 5.2 L14.3 5.4 L10.7 8.8 L11.9 13.9 L7.4 11.5 L2.8 13.9 L4.1 8.8 L0.4 5.4 L5.2 5.2 Z" fill="#d9d9d9" stroke="none" stroke-width="0.9" stroke-linejoin="round"/></svg>
<svg class="a" style="left:880.8px;top:793.8px" width="15" height="15" viewBox="0 0 15 15"><path d="M7.4 0.5 L9.6 5.2 L14.3 5.4 L10.7 8.8 L11.9 13.9 L7.4 11.5 L2.8 13.9 L4.1 8.8 L0.4 5.4 L5.2 5.2 Z" fill="#d9d9d9" stroke="none" stroke-width="0.9" stroke-linejoin="round"/></svg>
<svg class="a" style="left:1042px;top:791.5px" width="21" height="20" viewBox="0 0 21 20"><g fill="none" stroke="#a6b8e2" stroke-width="0.9"><path d="M1.5 0.6 V17.9 H20"/><path d="M3.8 17.9 V15.3 Q5.5 13.8 7.2 15.3 V17.9"/><path d="M9.5 17.9 V12.9 Q11 11.4 12.7 12.9 V17.9"/><path d="M15.2 17.9 V9.9 Q16.8 8.4 18.4 9.9 V17.9"/><path d="M4.3 10.9 L15 4.6"/></g><path d="M12.9 2.6 L17.3 3.7 L15.3 7.2 Z" fill="#a6b8e2"/></svg>
<div class="ev" style="left:268px;top:823px;width:305px;height:55px;display:flex;align-items:center"><div><span style="display:inline-block;transform:scaleX(1.3);transform-origin:0 50%;margin-right:2.8px">--</span>日本第三季度GDP外需季率-日历调整及季调后<br>修正值(%)</div></div>
<div class="c" style="letter-spacing:0.3px;text-indent:0.3px;left:581px;width:81px;top:823px;height:55px;line-height:55px">-0.4</div>
<div class="c" style="left:662px;width:81px;top:823px;height:55px;line-height:55px"><span style="display:inline-block;transform:scaleX(1.3);transform-origin:0 50%;margin-right:2.8px">--</span></div>
<div class="c" style="left:743px;width:81px;top:823px;height:55px;line-height:55px">待公布</div>
<div class="c" style="left:915px;width:111px;top:823px;height:55px;line-height:55px"><span style="display:inline-block;transform:scaleX(1.3);transform-origin:0 50%;margin-right:2.8px">--</span></div>
<svg class="a" style="left:844.8px;top:840.8px" width="15" height="15" viewBox="0 0 15 15"><path d="M7.4 0.5 L9.6 5.2 L14.3 5.4 L10.7 8.8 L11.9 13.9 L7.4 11.5 L2.8 13.9 L4.1 8.8 L0.4 5.4 L5.2 5.2 Z" fill="url(#sg)" stroke="#ff8400" stroke-width="0.9" stroke-linejoin="round"/></svg>
<svg class="a" style="left:862.8px;top:840.8px" width="15" height="15" viewBox="0 0 15 15"><path d="M7.4 0.5 L9.6 5.2 L14.3 5.4 L10.7 8.8 L11.9 13.9 L7.4 11.5 L2.8 13.9 L4.1 8.8 L0.4 5.4 L5.2 5.2 Z" fill="url(#sg)" stroke="#ff8400" stroke-width="0.9" stroke-linejoin="round"/></svg>
<svg class="a" style="left:880.8px;top:840.8px" width="15" height="15" viewBox="0 0 15 15"><path d="M7.4 0.5 L9.6 5.2 L14.3 5.4 L10.7 8.8 L11.9 13.9 L7.4 11.5 L2.8 13.9 L4.1 8.8 L0.4 5.4 L5.2 5.2 Z" fill="#d9d9d9" stroke="none" stroke-width="0.9" stroke-linejoin="round"/></svg>
<svg class="a" style="left:1042px;top:838.5px" width="21" height="20" viewBox="0 0 21 20"><g fill="none" stroke="#a6b8e2" stroke-width="0.9"><path d="M1.5 0.6 V17.9 H20"/><path d="M3.8 17.9 V15.3 Q5.5 13.8 7.2 15.3 V17.9"/><path d="M9.5 17.9 V12.9 Q11 11.4 12.7 12.9 V17.9"/><path d="M15.2 17.9 V9.9 Q16.8 8.4 18.4 9.9 V17.9"/><path d="M4.3 10.9 L15 4.6"/></g><path d="M12.9 2.6 L17.3 3.7 L15.3 7.2 Z" fill="#a6b8e2"/></svg>
<div class="ev b" style="left:268px;top:878px;width:305px;height:39px;display:flex;align-items:center"><div>澳大利亚10月投资房贷款值月率(%)</div></div>
<div class="c b" style="letter-spacing:0.3px;text-indent:0.3px;left:581px;width:81px;top:878px;height:39px;line-height:39px">-1</div>
<div class="c b" style="left:662px;width:81px;top:878px;height:39px;line-height:39px"><span style="display:inline-block;transform:scaleX(1.3);transform-origin:0 50%;margin-right:2.8px">--</span></div>
<div class="c b" style="left:743px;width:81px;top:878px;height:39px;line-height:39px">待公布</div>
<div class="c" style="left:915px;width:111px;top:878px;height:39px;line-height:39px"><span style="display:inline-block;transform:scaleX(1.3);transform-origin:0 50%;margin-right:2.8px">--</span></div>
<svg class="a" style="left:844.8px;top:887.8px" width="15" height="15" viewBox="0 0 15 15"><path d="M7.4 0.5 L9.6 5.2 L14.3 5.4 L10.7 8.8 L11.9 13.9 L7.4 11.5 L2.8 13.9 L4.1 8.8 L0.4 5.4 L5.2 5.2 Z" fill="url(#sg)" stroke="#ff8400" stroke-width="0.9" stroke-linejoin="round"/></svg>
<svg class="a" style="left:862.8px;top:887.8px" width="15" height="15" viewBox="0 0 15 15"><path d="M7.4 0.5 L9.6 5.2 L14.3 5.4 L10.7 8.8 L11.9 13.9 L7.4 11.5 L2.8 13.9 L4.1 8.8 L0.4 5.4 L5.2 5.2 Z" fill="url(#sg)" stroke="#ff8400" stroke-width="0.9" stroke-linejoin="round"/></svg>
<svg class="a" style="left:880.8px;top:887.8px" width="15" height="15" viewBox="0 0 15 15"><path d="M7.4 0.5 L9.6 5.2 L14.3 5.4 L10.7 8.8 L11.9 13.9 L7.4 11.5 L2.8 13.9 L4.1 8.8 L0.4 5.4 L5.2 5.2 Z" fill="url(#sg)" stroke="#ff8400" stroke-width="0.9" stroke-linejoin="round"/></svg>
<svg class="a" style="left:1042px;top:885.5px" width="21" height="20" viewBox="0 0 21 20"><g fill="none" stroke="#a6b8e2" stroke-width="0.9"><path d="M1.5 0.6 V17.9 H20"/><path d="M3.8 17.9 V15.3 Q5.5 13.8 7.2 15.3 V17.9"/><path d="M9.5 17.9 V12.9 Q11 11.4 12.7 12.9 V17.9"/><path d="M15.2 17.9 V9.9 Q16.8 8.4 18.4 9.9 V17.9"/><path d="M4.3 10.9 L15 4.6"/></g><path d="M12.9 2.6 L17.3 3.7 L15.3 7.2 Z" fill="#a6b8e2"/></svg>
<div class="dd"></div>
<div class="a" style="left:386px;top:82px;width:130px;height:40px;background:#ff9d5d"></div>
<div class="ddi" style="top:43px">财经日历</div>
<div class="ddi" style="top:83px">财经周历</div>
<div class="ddi" style="top:123px">美国数据</div>
<div class="ddi" style="top:163px">央行动态</div>
<div class="ddi" style="top:203px">各国数据</div>
<div class="ddi" style="top:243px">CFTC持仓</div>
<div class="ddi" style="top:283px">美联储</div>
<svg class="a" style="left:0;top:0" width="1090" height="916">
<rect x="379" y="89" width="154" height="31.5" rx="4.5" fill="none" stroke="#e8402a" stroke-width="4"/>
<rect x="1035" y="271.2" width="40" height="639.5" rx="3.5" fill="none" stroke="#e8402a" stroke-width="4"/>
<path d="M99 34.8 L135 42.6 L170 49.6 L260 69.3 L366 92.5 L369.2 87.2 L382.8 99 L365 103.8 L364.5 98.6 L260 74 L170 53.3 L135 44.7 L99 36.4 Z" fill="#e8402a"/>
</svg>
</body></html>
